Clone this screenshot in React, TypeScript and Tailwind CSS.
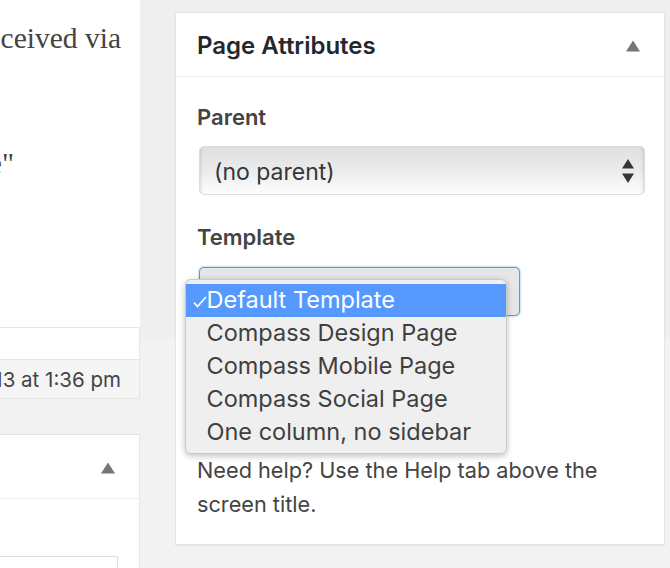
const Caret = () => (
  <svg width="14" height="12" viewBox="0 0 14 12" className="block mt-[2px]">
    <path d="M7 0.5 L14 11.5 L0 11.5 Z" fill="#72777c" />
  </svg>
);

const Updown = () => (
  <svg width="14" height="24" viewBox="0 0 14 24" className="block">
    <path d="M7 0 L13 9.5 L1 9.5 Z M7 24 L1 14.5 L13 14.5 Z" fill="#32373c" />
  </svg>
);

const options = ["Compass Design Page", "Compass Mobile Page", "Compass Social Page", "One column, no sidebar"];

export default function App() {
  return (
    <div className="flex w-[670px] h-[568px] overflow-hidden bg-[linear-gradient(#efefef_338px,#f2f2f2_338px)] font-['Inter','Liberation_Sans',sans-serif] text-[#444]">
      {/* Editor column, cut off on the left */}
      <div className="w-[140px] shrink-0 flex flex-col">
        <div className="h-[327px] shrink-0 bg-white overflow-hidden font-['Liberation_Serif',serif] text-[29.5px] leading-[38px] text-[#444] whitespace-nowrap">
          <div className="flex justify-end pt-[19px] pr-[19px]">received via</div>
          <div className="flex justify-end pt-[87px] pr-[126px]">age"</div>
        </div>
        <div className="h-[33px] shrink-0 bg-white border-y border-r border-[#e5e5e5]" />
        <div className="h-[39px] shrink-0 bg-[#f5f5f5] border-b border-r border-[#e5e5e5] flex items-center justify-end pr-[18px] pt-[2px] text-[20.5px] whitespace-nowrap overflow-hidden">
          2013 at 1:36 pm
        </div>
        <div className="mt-[35px] flex-1 bg-white border-t border-r border-[#e5e5e5]">
          <div className="h-[64px] border-b border-[#eeeeee] flex items-center justify-end pr-[24px]">
            <Caret />
          </div>
          <div className="mt-[57px] mr-[21px] h-[30px] border-t border-r border-[#dddddd]" />
        </div>
      </div>

      {/* Page Attributes box */}
      <div className="ml-[35px] mt-[12px] w-[490px] h-[533px] bg-white border border-[#e5e5e5] shadow-[0_1px_1px_rgba(0,0,0,0.04)]">
        <div className="h-[64px] border-b border-[#eeeeee] flex items-center justify-between pl-[21px] pr-[24px]">
          <h2 className="text-[24px] font-semibold text-[#23282d] pt-[2px]">Page Attributes</h2>
          <Caret />
        </div>
        <div className="px-[21px] pt-[25px]">
          <p className="text-[22px] leading-[30px] font-semibold">Parent</p>
          <div className="mt-[14px] ml-[2px] w-[446px] h-[49px] rounded-[5px] border border-[#dddddd] bg-gradient-to-b from-[#e0e0e0] via-[#ebebeb] to-[#fdfdfd] shadow-[inset_3px_0_3px_-2px_rgba(0,0,0,0.12),inset_-3px_0_3px_-2px_rgba(0,0,0,0.12)] flex items-center justify-between pl-[14px] pr-[9px] text-[23px] text-[#32373c]">
            <span className="pt-[4px]">(no parent)</span>
            <Updown />
          </div>
          <p className="mt-[27px] text-[22px] leading-[30px] font-semibold">Template</p>
          <div className="relative mt-[15px] ml-[2px] w-[321px] h-[49px] rounded-[5px] border border-[#5b9dd9] bg-[#e6e6e6] shadow-[0_0_2px_rgba(30,140,190,0.8)]">
            <div className="absolute left-[-15px] top-[11px] w-[322px] h-[175px] rounded-[6px] bg-[#efefef] border border-[#c9c9c9] shadow-[0_2px_6px_rgba(0,0,0,0.25)] py-[4px] text-[23.5px] text-[#3f3f3f]">
              <div className="relative h-[33px] bg-[#5599ff] text-white pl-[20.5px] pb-[2px] flex items-center">
                <svg width="14" height="12" viewBox="0 0 14 12" className="absolute left-[7px] top-[12px]">
                  <path d="M1 6.5 L4.5 10.5 L13 1" fill="none" stroke="#fff" strokeWidth="1.8" />
                </svg>
                Default Template
              </div>
              {options.map((option) => (
                <div key={option} className="h-[33px] pl-[20.5px] pb-[2px] flex items-center whitespace-nowrap">
                  {option}
                </div>
              ))}
            </div>
          </div>
          <p className="mt-[137px] text-[21.7px] leading-[34px]">
            Need help? Use the Help tab above the screen title.
          </p>
        </div>
      </div>
    </div>
  );
}
